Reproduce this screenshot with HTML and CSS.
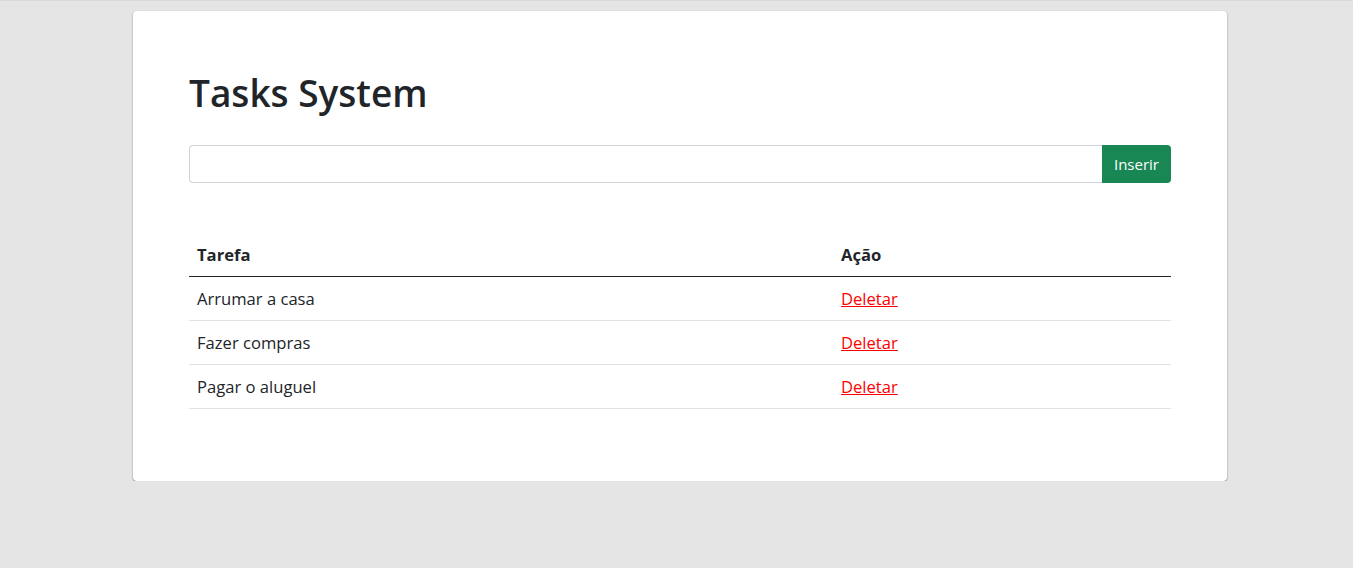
FILE: index.html
```html
<!DOCTYPE html>
<html lang="pt-BR">
<head>
<meta charset="utf-8">
<title>Tasks System</title>
<link rel="stylesheet" href="styles.css">
</head>
<body>
<div class="page">
  <main class="card">
    <h1 class="title">Tasks System</h1>
    <form class="input-group">
      <input class="task-input" type="text">
      <button class="btn-insert" type="button">Inserir</button>
    </form>
    <table class="tasks">
      <thead>
        <tr><th class="col-task">Tarefa</th><th>Ação</th></tr>
      </thead>
      <tbody>
        <tr><td>Arrumar a casa</td><td><a class="del" href="#">Deletar</a></td></tr>
        <tr><td>Fazer compras</td><td><a class="del" href="#">Deletar</a></td></tr>
        <tr><td>Pagar o aluguel</td><td><a class="del" href="#">Deletar</a></td></tr>
      </tbody>
    </table>
  </main>
</div>
</body>
</html>
```
FILE: styles.css
```css
html, body {
  margin: 0;
  padding: 0;
}
body {
  background: #e5e5e5;
  border-top: 1px solid #d9d9d9;
  font-family: "Open Sans", "Noto Sans", sans-serif;
  color: #212529;
}
.page {
  padding: 10px 0 0 7px;
  display: flex;
  justify-content: center;
}
.card {
  width: 1094px;
  box-sizing: border-box;
  background: #fff;
  border-radius: 4px;
  box-shadow: 0 1px 2px rgba(0,0,0,0.45);
  padding: 56px 56px 56px;
}
.title {
  font-size: 37px;
  font-weight: 600;
  line-height: 48px;
  padding-top: 2px;
  margin: 0 0 28px;
}
.input-group {
  display: flex;
  margin: 0 0 50px;
}
.task-input {
  flex: 1;
  height: 38px;
  box-sizing: border-box;
  border: 1px solid #ced4da;
  border-right: none;
  border-radius: 4px 0 0 4px;
  padding: 6px 12px;
  font: inherit;
  font-size: 16px;
}
.btn-insert {
  width: 69px;
  height: 38px;
  border: none;
  background: #198754;
  color: #fff;
  border-radius: 0 4px 4px 0;
  font-family: inherit;
  font-size: 15px;
  padding: 0;
}
.tasks {
  width: 100%;
  border-collapse: collapse;
  font-size: 16.6px;
  margin-bottom: 16px;
}
.tasks th, .tasks td {
  text-align: left;
  padding: 8px 8px;
  line-height: 27px;
  border-bottom: 1px solid #dee2e6;
}
.tasks th {
  font-weight: 700;
  border-bottom: 1px solid #212529;
}
.col-task {
  width: 628px;
}
.del {
  color: #ff0000;
  text-decoration: underline;
}
```
